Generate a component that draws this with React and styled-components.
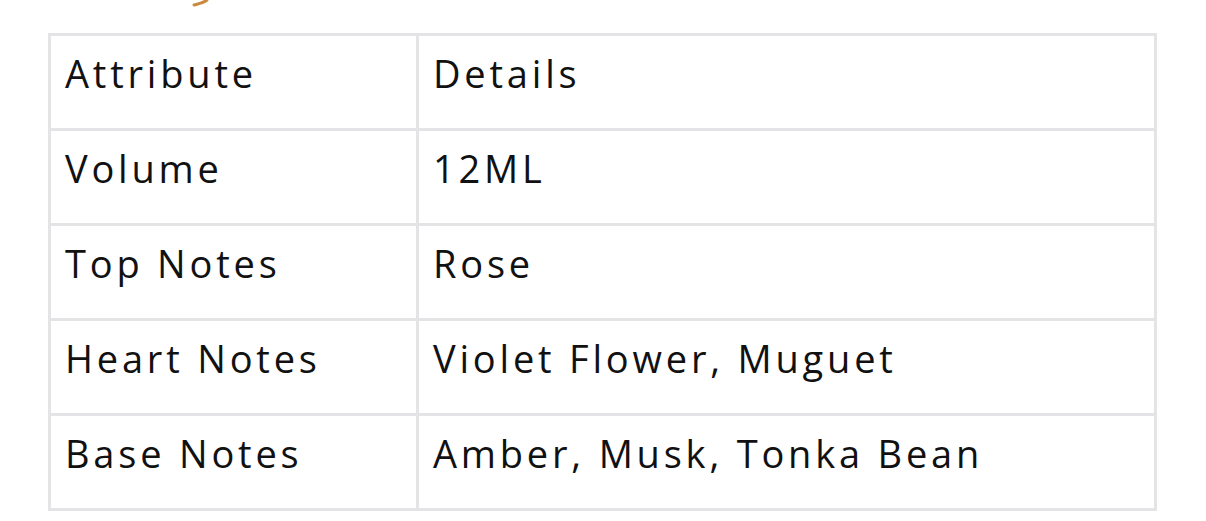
import React from "react";
import styled, { createGlobalStyle } from "styled-components";

const GlobalStyle = createGlobalStyle`
  html, body {
    margin: 0;
    padding: 0;
    background: #ffffff;
  }
  body {
    font-family: "Open Sans", "Noto Sans", sans-serif;
    color: #111111;
  }
`;

const Page = styled.div`
  padding: 0 49px 0 48px;
`;

const Flourish = styled.div`
  height: 33px;
  padding-left: 140px;
  svg {
    display: block;
  }
`;

const Table = styled.table`
  width: 100%;
  table-layout: fixed;
  border-spacing: 0;
  border-top: 3px solid #e4e4e7;
  border-left: 3px solid #e4e4e7;
`;

const Cell = styled.td`
  border-right: 3px solid #e4e4e7;
  border-bottom: 3px solid #e4e4e7;
  padding: 16px 14px 34px;
  font-size: 38px;
  line-height: 42px;
  letter-spacing: 3.8px;
  font-weight: 400;
  vertical-align: top;
  white-space: nowrap;
`;

const rows = [
  ["Attribute", "Details"],
  ["Volume", "12ML"],
  ["Top Notes", "Rose"],
  ["Heart Notes", "Violet Flower, Muguet"],
  ["Base Notes", "Amber, Musk, Tonka Bean"],
];

export default function App() {
  return (
    <>
      <GlobalStyle />
      <Page>
        <Flourish>
          <svg width="30" height="8" viewBox="0 0 30 8">
            <path
              d="M6 5 C 10 4, 15 3, 19 0"
              stroke="#c98a3c"
              strokeWidth="3"
              fill="none"
              strokeLinecap="round"
            />
          </svg>
        </Flourish>
        <Table>
          <colgroup>
            <col style={{ width: 368 }} />
            <col />
          </colgroup>
          <tbody>
            {rows.map(([attr, detail]) => (
              <tr key={attr}>
                <Cell>{attr}</Cell>
                <Cell>{detail}</Cell>
              </tr>
            ))}
          </tbody>
        </Table>
      </Page>
    </>
  );
}
